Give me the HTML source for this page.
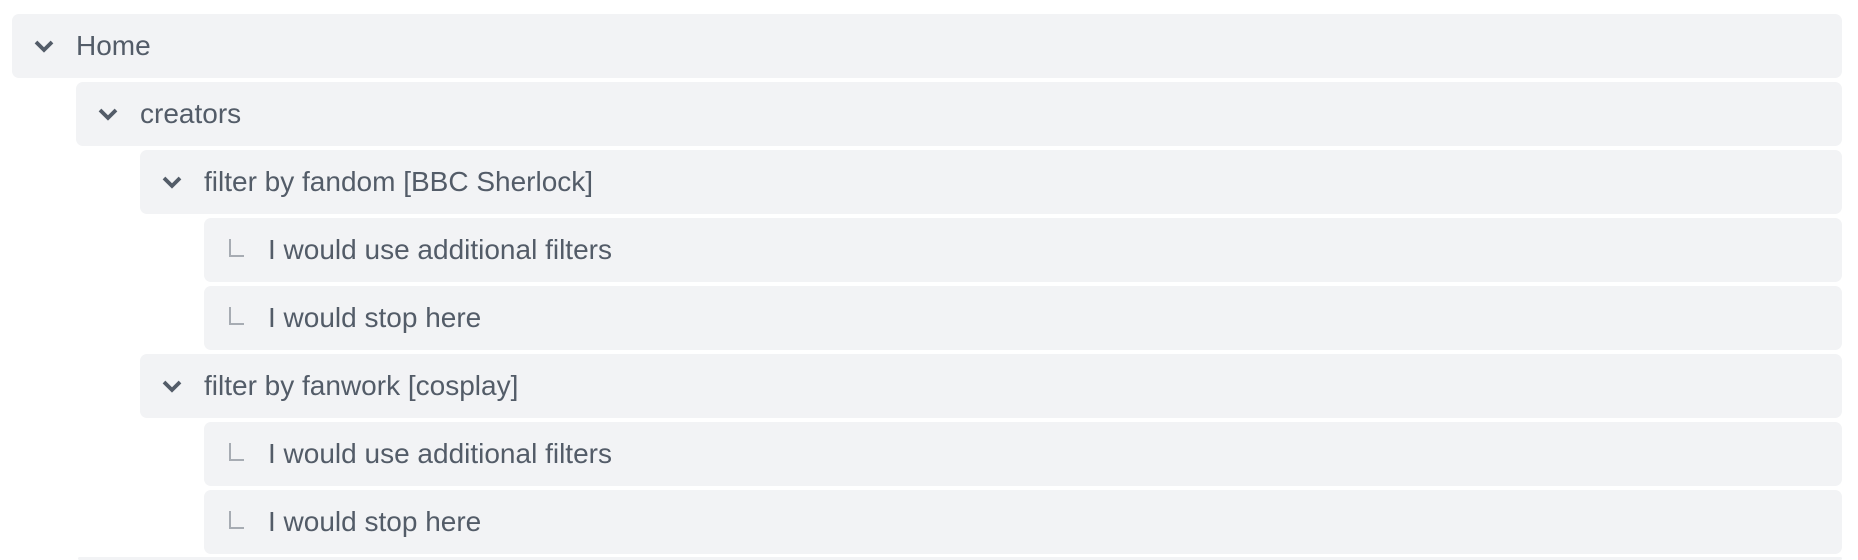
<!DOCTYPE html>
<html style="overflow:hidden;height:560px"><head><style>
html,body{margin:0;}
body{background:#fff;width:1858px;height:560px;overflow:hidden;font-family:"Liberation Sans",sans-serif;}
#w{position:relative;width:1858px;height:560px;overflow:hidden;}
.r{position:absolute;height:64px;right:16px;background:#f2f3f5;border-radius:7px;color:#535c68;font-size:28px;line-height:64px;}
.r span{position:absolute;left:64px;top:0;white-space:nowrap;}
.r svg{position:absolute;left:20px;top:20px;}
.c{position:absolute;left:25px;top:21px;width:13px;height:16px;border-left:2px solid #a7acb3;border-bottom:2px solid #a7acb3;}
</style></head><body><div id="w">
<div class="r" style="left:12px;top:14px"><svg width="24" height="24" viewBox="0 0 24 24"><path d="M4 8l8 8 8-8" fill="none" stroke="#535c68" stroke-width="3.8"/></svg><span>Home</span></div>
<div class="r" style="left:76px;top:82px"><svg width="24" height="24" viewBox="0 0 24 24"><path d="M4 8l8 8 8-8" fill="none" stroke="#535c68" stroke-width="3.8"/></svg><span>creators</span></div>
<div class="r" style="left:140px;top:150px"><svg width="24" height="24" viewBox="0 0 24 24"><path d="M4 8l8 8 8-8" fill="none" stroke="#535c68" stroke-width="3.8"/></svg><span>filter by fandom [BBC Sherlock]</span></div>
<div class="r" style="left:204px;top:218px"><div class="c"></div><span>I would use additional filters</span></div>
<div class="r" style="left:204px;top:286px"><div class="c"></div><span>I would stop here</span></div>
<div class="r" style="left:140px;top:354px"><svg width="24" height="24" viewBox="0 0 24 24"><path d="M4 8l8 8 8-8" fill="none" stroke="#535c68" stroke-width="3.8"/></svg><span>filter by fanwork [cosplay]</span></div>
<div class="r" style="left:204px;top:422px"><div class="c"></div><span>I would use additional filters</span></div>
<div class="r" style="left:204px;top:490px"><div class="c"></div><span>I would stop here</span></div>
<div class="r" style="left:78px;top:557px;height:3px"></div>
</div></body></html>
